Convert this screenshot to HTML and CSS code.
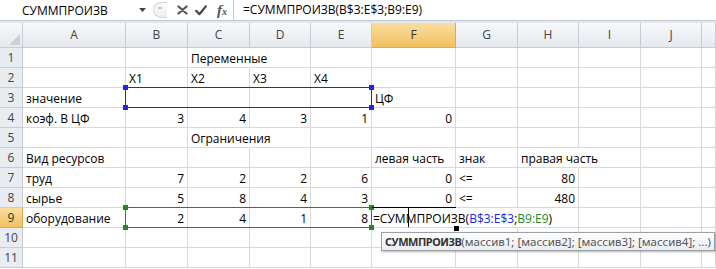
FILE: index.html
```html
<!DOCTYPE html>
<html lang="ru">
<head>
<meta charset="utf-8">
<title>СУММПРОИЗВ</title>
<link rel="stylesheet" href="styles.css">
</head>
<body>
<div class="fbar">
  <div class="namebox">
    <span class="name">СУММПРОИЗВ</span>
    <svg class="dd" width="7" height="4" viewBox="0 0 7 4"><path d="M0 0h7L3.5 4z" fill="#444"/></svg>
  </div>
  <div class="fbtns">
    <span class="grip"><span class="dot"></span></span>
    <svg class="ico" width="11" height="10" viewBox="0 0 11 10"><path d="M1.5 1.5l8 7M9.5 1.5l-8 7" stroke="#555" stroke-width="2.2" stroke-linecap="round" fill="none"/></svg>
    <svg class="ico" width="12" height="11" viewBox="0 0 12 11"><path d="M1.2 5.8l3.2 3.4L10.8 1.4" stroke="#444" stroke-width="2.2" stroke-linecap="round" stroke-linejoin="round" fill="none"/></svg>
    <span class="fx">f<span class="fxs">x</span></span>
  </div>
  <div class="finput">=СУММПРОИЗВ(B$3:E$3;B9:E9)</div>
</div>

<div class="wrap">
<div class="sheet">
  <div class="ch corner"><span class="tri"></span></div>
  <div class="ch">A</div><div class="ch">B</div><div class="ch">C</div><div class="ch">D</div><div class="ch">E</div>
  <div class="ch hl">F</div><div class="ch">G</div><div class="ch">H</div><div class="ch">I</div><div class="ch">J</div><div class="ch"></div>

  <div class="rh">1</div>
  <div class="c"></div><div class="c"></div><div class="c nob">Переменные</div><div class="c"></div><div class="c"></div><div class="c"></div><div class="c"></div><div class="c"></div><div class="c"></div><div class="c"></div><div class="c"></div>

  <div class="rh">2</div>
  <div class="c"></div><div class="c">X1</div><div class="c">X2</div><div class="c">X3</div><div class="c">X4</div><div class="c"></div><div class="c"></div><div class="c"></div><div class="c"></div><div class="c"></div><div class="c"></div>

  <div class="rh">3</div>
  <div class="c">значение</div><div class="c"></div><div class="c"></div><div class="c"></div><div class="c"></div><div class="c">ЦФ</div><div class="c"></div><div class="c"></div><div class="c"></div><div class="c"></div><div class="c"></div>

  <div class="rh">4</div>
  <div class="c">коэф. В ЦФ</div><div class="c r">3</div><div class="c r">4</div><div class="c r">3</div><div class="c r">1</div><div class="c r">0</div><div class="c"></div><div class="c"></div><div class="c"></div><div class="c"></div><div class="c"></div>

  <div class="rh">5</div>
  <div class="c"></div><div class="c"></div><div class="c nob">Ограничения</div><div class="c"></div><div class="c"></div><div class="c"></div><div class="c"></div><div class="c"></div><div class="c"></div><div class="c"></div><div class="c"></div>

  <div class="rh">6</div>
  <div class="c">Вид ресурсов</div><div class="c"></div><div class="c"></div><div class="c"></div><div class="c"></div><div class="c">левая часть</div><div class="c">знак</div><div class="c nob">правая часть</div><div class="c"></div><div class="c"></div><div class="c"></div>

  <div class="rh">7</div>
  <div class="c">труд</div><div class="c r">7</div><div class="c r">2</div><div class="c r">2</div><div class="c r">6</div><div class="c r">0</div><div class="c">&lt;=</div><div class="c r">80</div><div class="c"></div><div class="c"></div><div class="c"></div>

  <div class="rh">8</div>
  <div class="c">сырье</div><div class="c r">5</div><div class="c r">8</div><div class="c r">4</div><div class="c r">3</div><div class="c r">0</div><div class="c">&lt;=</div><div class="c r">480</div><div class="c"></div><div class="c"></div><div class="c"></div>

  <div class="rh hl">9</div>
  <div class="c">оборудование</div><div class="c r">2</div><div class="c r">4</div><div class="c r">1</div><div class="c r">8</div><div class="c nob"></div><div class="c nob"></div><div class="c"></div><div class="c"></div><div class="c"></div><div class="c"></div>

  <div class="rh">10</div>
  <div class="c"></div><div class="c"></div><div class="c"></div><div class="c"></div><div class="c"></div><div class="c"></div><div class="c"></div><div class="c"></div><div class="c"></div><div class="c"></div><div class="c"></div>

  <div class="rh">11</div>
  <div class="c"></div><div class="c"></div><div class="c"></div><div class="c"></div><div class="c"></div><div class="c"></div><div class="c"></div><div class="c"></div><div class="c"></div><div class="c"></div><div class="c"></div>
</div>

<div class="layer">
  <div class="range blue"><i class="h tl"></i><i class="h bl"></i><i class="h tr"></i><i class="h br"></i></div>
  <div class="range green"><i class="h tl"></i><i class="h bl"></i><i class="h tr"></i><i class="h br"></i></div>
  <div class="active"><i class="caret"></i><i class="fill"></i></div>
  <div class="editor">=СУММПРОИЗВ(<span class="rb">B$3:E$3</span>;<span class="rg">B9:E9</span>)</div>
</div>

<div class="tip"><b>СУММПРОИЗВ</b>(массив1; [массив2]; [массив3]; [массив4]; ...)</div>
</div>
</body>
</html>
```
FILE: styles.css
```css
* { box-sizing: border-box; }
html, body { margin: 0; background: #fff; }
body {
  width: 716px;
  height: 269px;
  overflow: hidden;
  font-family: "Open Sans", "Noto Sans", sans-serif;
  font-size: 12px;
  color: #000;
}

/* formula bar */
.fbar {
  display: flex;
  height: 23px;
  background: #e3e7ec;
  padding-bottom: 2px;
}
.namebox {
  width: 150px;
  height: 21px;
  background: #fff;
  border-bottom: 1px solid #c3c9d1;
  display: flex;
  align-items: center;
  padding-left: 22px;
}
.name { flex: 1; }
.dd { margin-right: 4px; }
.fbtns {
  width: 83px;
  height: 21px;
  background: #fff;
  border-bottom: 1px solid #c3c9d1;
  display: flex;
  align-items: center;
  padding-left: 3px;
}
.grip {
  width: 14px;
  height: 16px;
  border: 1px solid #d3d7dd;
  border-right: none;
  border-radius: 8px 0 0 8px;
  background: linear-gradient(#fafbfc, #eceff3);
  position: relative;
  margin-right: 10px;
}
.dot {
  position: absolute;
  left: 4px;
  top: 4px;
  width: 4px;
  height: 2px;
  background: #c4c8ce;
}
.ico { margin-right: 7px; }
.fx {
  font-family: "Liberation Serif", serif;
  font-style: italic;
  font-size: 15px;
  color: #555;
  font-weight: bold;
  margin-left: 3px;
  line-height: 1;
}
.fxs { font-size: 10px; }
.finput {
  flex: 1;
  height: 21px;
  background: #fff;
  border-left: 1px solid #c3c9d1;
  border-bottom: 1px solid #c3c9d1;
  padding-left: 9px;
  line-height: 20px;
  white-space: nowrap;
}

/* sheet */
.wrap {
  position: relative;
  display: grid;
}
.sheet, .layer {
  grid-area: 1 / 1;
  display: grid;
  grid-template-columns: 23px 103px 62px 62px 61px 61px 84px 62px 61px 62px 61px 1fr;
  grid-template-rows: 25px repeat(11, 20px);
}
.ch, .rh {
  color: #444;
  text-align: center;
  border-right: 1px solid #c6ccd4;
  border-bottom: 1px solid #c6ccd4;
  white-space: nowrap;
}
.ch {
  background: linear-gradient(#f7f8fa, #e6e9ee);
  line-height: 24px;
}
.rh {
  background: #e9ecf0;
  line-height: 20px;
}
.ch.hl, .rh.hl {
  background: linear-gradient(#f9dea0, #f1c15f);
  border-color: #d9ab52;
  color: #333;
}
.corner { position: relative; }
.tri {
  position: absolute;
  right: 2px;
  bottom: 2px;
  width: 0;
  height: 0;
  border-left: 11px solid transparent;
  border-bottom: 11px solid #cdd1d6;
}
.c {
  border-right: 1px solid #d9d9d9;
  border-bottom: 1px solid #d9d9d9;
  padding: 0 3px;
  line-height: 21px;
  white-space: nowrap;
}
.c.r { text-align: right; }
.c.nob { border-right-color: transparent; }

/* overlay layer */
.layer { pointer-events: none; }
.range {
  position: relative;
  grid-column: 3 / 7;
  margin: -1px 0 0 -1px;
  border: 1px solid;
}
.range.blue { grid-row: 4; border-color: #2424e0; }
.range.green { grid-row: 10; border-color: #1f8a1f; }
.h {
  position: absolute;
  width: 5px;
  height: 5px;
}
.blue .h { background: #2424e0; }
.green .h { background: #1f8a1f; }
.tl { left: -3px; top: -3px; }
.bl { left: -3px; bottom: -3px; }
.tr { right: -3px; top: -3px; }
.br { right: -3px; bottom: -3px; }

.active {
  position: relative;
  grid-row: 10;
  grid-column: 7;
  margin-top: -1px;
  border-top: 1px solid #000;
}
.caret {
  position: absolute;
  left: 36px;
  top: 0;
  width: 1px;
  height: 19px;
  background: #000;
}
.fill {
  position: absolute;
  right: -3px;
  bottom: -3px;
  width: 5px;
  height: 5px;
  background: #000;
}
.editor {
  grid-row: 10;
  grid-column: 7 / 10;
  justify-self: start;
  align-self: start;
  height: 19px;
  padding: 0 2px 0 1px;
  line-height: 21px;
  white-space: nowrap;
}
.rb { color: #2424e0; }
.rg { color: #1f8a1f; }

.tip {
  position: absolute;
  left: 381px;
  top: 209px;
  height: 19px;
  padding: 0 3px;
  border: 1px solid #9ca1a8;
  background: linear-gradient(#ffffff, #e9ecf1);
  box-shadow: 1px 1px 2px rgba(0, 0, 0, 0.3);
  font-family: "Noto Sans", sans-serif;
  font-size: 11.5px;
  color: #555;
  line-height: 17px;
  white-space: nowrap;
}
.tip b {
  font-size: 11px;
  letter-spacing: -0.5px;
  color: #333;
}
```
